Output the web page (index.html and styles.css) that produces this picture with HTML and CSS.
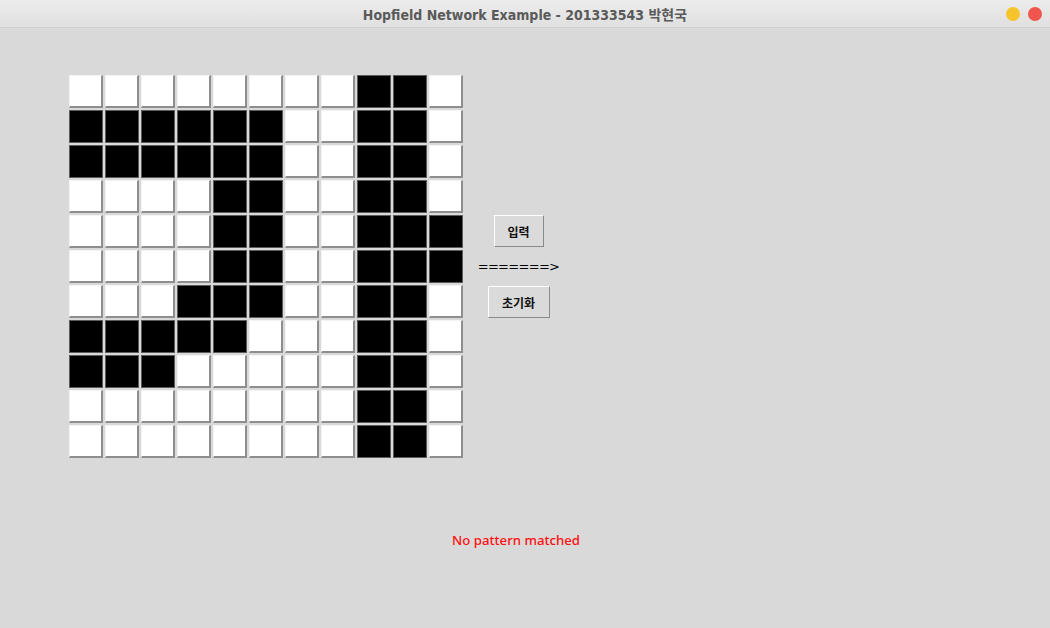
FILE: index.html
```html
<!DOCTYPE html>
<html lang="ko">
<head>
<meta charset="utf-8">
<title>Hopfield Network Example</title>
<link rel="stylesheet" href="styles.css">
</head>
<body>
<div class="window">
  <div class="titlebar">
    <div class="title">Hopfield Network Example - 201333543 박현국</div>
    <div class="lights">
      <span class="light yellow"></span>
      <span class="light red"></span>
    </div>
  </div>
  <div class="content">
    <div class="main">
      <div class="grid" id="grid"></div>
      <div class="controls">
        <button class="btn btn-input">입력</button>
        <div class="arrow">=======&gt;</div>
        <button class="btn btn-reset">초기화</button>
      </div>
    </div>
    <div class="status">No pattern matched</div>
  </div>
</div>
<script>
(function () {
  var rows = [
    "00000000110",
    "11111100110",
    "11111100110",
    "00001100110",
    "00001100111",
    "00001100111",
    "00011100110",
    "11111000110",
    "11100000110",
    "00000000110",
    "00000000110"
  ];
  var g = document.getElementById("grid");
  rows.forEach(function (r) {
    for (var i = 0; i < r.length; i++) {
      var c = document.createElement("div");
      c.className = "cell " + (r[i] === "1" ? "on" : "off");
      g.appendChild(c);
    }
  });
})();
</script>
</body>
</html>
```

FILE: styles.css
```css
html, body {
  margin: 0;
  padding: 0;
  background: #d9d9d9;
}
.window {
  width: 1050px;
  height: 628px;
  background: #d9d9d9;
  font-family: "Noto Sans", "Noto Sans CJK KR", sans-serif;
  overflow: hidden;
}
.titlebar {
  height: 28px;
  background: linear-gradient(#ececec, #e0e0e0);
  border-bottom: 1px solid #d0d0d0;
  box-sizing: border-box;
  display: flex;
  align-items: center;
  justify-content: center;
  position: relative;
}
.title {
  font-family: "DejaVu Sans Condensed", "Noto Sans CJK KR", sans-serif;
  font-weight: bold;
  font-size: 14px;
  color: #5a5a5a;
  letter-spacing: 0;
}
.lights {
  position: absolute;
  right: 8px;
  top: 7px;
  display: flex;
  gap: 8px;
}
.light {
  width: 14px;
  height: 14px;
  border-radius: 50%;
  display: block;
}
.yellow { background: #f6c42b; }
.red { background: #f0564d; }
.content {
  padding: 47px 0 0 69px;
}
.main {
  display: flex;
  align-items: center;
}
.grid {
  display: grid;
  grid-template-columns: repeat(11, 34px);
  grid-auto-rows: 33px;
  column-gap: 2px;
  row-gap: 2px;
}
.cell {
  box-sizing: border-box;
}
.cell.off {
  background: #ffffff;
  border-top: 1px solid #f4f4f4;
  border-left: 1px solid #f4f4f4;
  border-right: 2px solid #8e8e8e;
  border-bottom: 2px solid #8e8e8e;
}
.cell.on {
  background: #000000;
  border: 1px solid #5c5c5c;
}
.controls {
  margin-left: 16px;
  width: 79px;
  display: flex;
  flex-direction: column;
  align-items: center;
}
.btn {
  font-family: "Noto Sans CJK KR", sans-serif;
  font-weight: bold;
  font-size: 12px;
  color: #111;
  background: #dadada;
  border-top: 1px solid #ffffff;
  border-left: 1px solid #ffffff;
  border-right: 1px solid #8a8a8a;
  border-bottom: 1px solid #8a8a8a;
  height: 32px;
  padding: 0;
  margin: 0;
  border-radius: 0;
}
.btn-input { width: 50px; }
.btn-reset { width: 62px; }
.arrow {
  font-family: "DejaVu Sans", sans-serif;
  font-size: 13px;
  color: #000;
  height: 39px;
  line-height: 39px;
  letter-spacing: -0.7px;
}
.status {
  width: 894px;
  text-align: center;
  margin-top: 73px;
  font-family: "Noto Sans", sans-serif;
  font-weight: 500;
  font-size: 13.2px;
  color: #ff1010;
}
```
